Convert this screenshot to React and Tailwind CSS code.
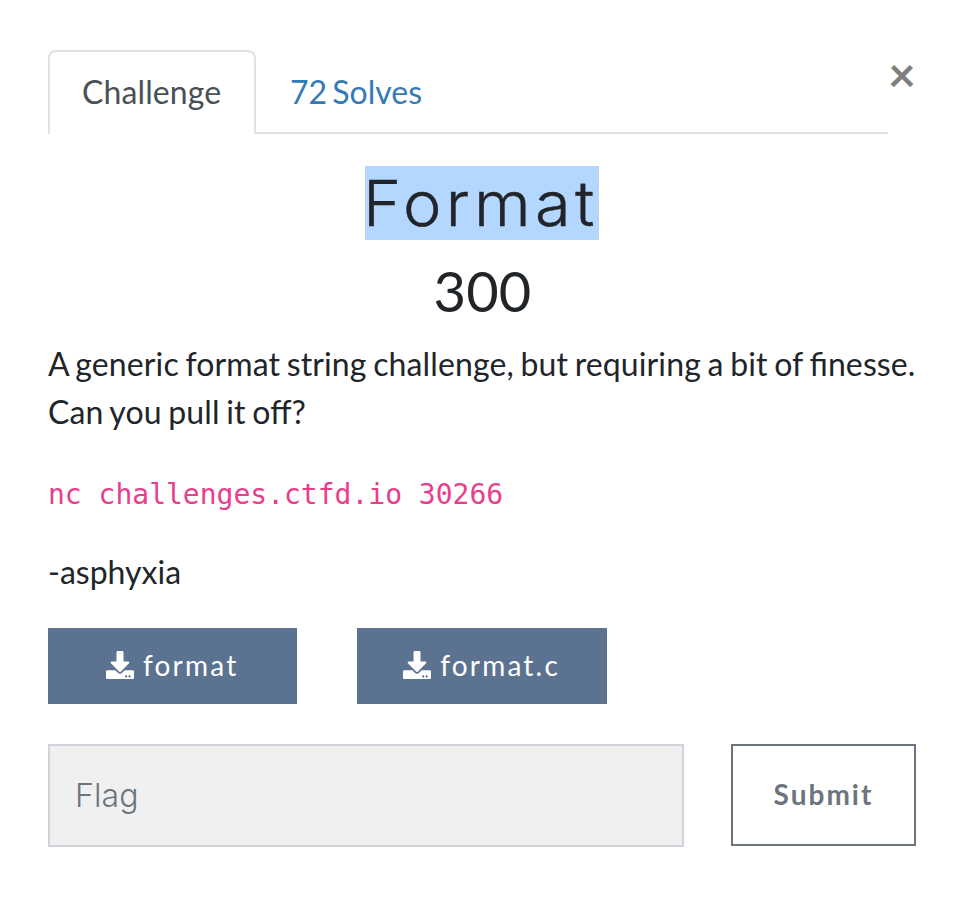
import React from "react";
import { FaDownload } from "react-icons/fa";

function Title() {
  return (
    <div className="mt-8 flex h-[74px] w-[868px] justify-center">
      <h2 className="h-[74px] w-[234px] bg-[#b3d7ff] text-left font-['Inter',sans-serif] text-[63px] leading-[74px] font-light tracking-[4.2px] whitespace-nowrap text-[#212529]">
        <span className="-ml-0.5 inline-block origin-left scale-x-[1.03] [-webkit-text-stroke:0.4px]">Format</span>
      </h2>
    </div>
  );
}

function FileButton({ name }) {
  return (
    <a className="flex h-[76px] w-[249.4px] items-center justify-center gap-[9px] bg-[#5b7290] pr-px pb-0.5 text-[28px] tracking-[2.2px] text-white">
      <FaDownload className="size-7" />
      <span>{name}</span>
    </a>
  );
}

export default function App() {
  return (
    <main className="h-[922px] w-[970px] bg-white px-12 pt-[50px] font-['Lato',sans-serif] text-[32px] leading-[48px] tracking-[0.12px] text-[#212529] [font-feature-settings:'liga'_1] [word-spacing:-1.7px]">
      <header className="flex h-[84px]">
        <nav className="flex w-[840px] border-b-2 border-[#dee2e6]">
          <a className="-mb-0.5 h-[84px] w-[208px] rounded-t-lg border-2 border-b-0 border-[#dee2e6] bg-white pt-4 pl-8 text-[#495057]">Challenge</a>
          <a className="pt-[18px] pl-[34px] tracking-normal text-[#337ab7] [word-spacing:-3px]">72 Solves</a>
        </nav>
        <button className="h-12 w-7 text-[48px] leading-[48px] font-bold text-[#7f7f7f]">×</button>
      </header>
      <Title />
      <h3 className="mt-[17px] h-[68px] w-[869px] text-center text-[56px] leading-[68px]">300</h3>
      <p className="mt-[15px] whitespace-nowrap">A generic format string challenge, but requiring a bit of finesse.<br />Can you pull it off?</p>
      <p className="mt-[35px] font-['DejaVu_Sans_Mono',monospace] text-[28px] tracking-normal text-[#e83e8c] [word-spacing:0px]">nc challenges.ctfd.io 30266</p>
      <p className="mt-[29px] tracking-normal">-asphyxia</p>
      <div className="mt-8 flex gap-[60px]">
        <FileButton name="format" />
        <FileButton name="format.c" />
      </div>
      <form className="mt-10 flex justify-between pr-1.5">
        <input placeholder="Flag" className="h-[103px] w-[636px] border-2 border-[#ced4da] bg-[#f0f0f0] px-[25px] font-['Inter',sans-serif] text-[32px] font-light placeholder:text-[#6c757d]" />
        <button type="button" className="h-[102px] w-[185px] border-2 border-[#6c757d] pb-0.5 text-[28px] font-bold tracking-[2px] text-[#6c757d]">Submit</button>
      </form>
    </main>
  );
}
